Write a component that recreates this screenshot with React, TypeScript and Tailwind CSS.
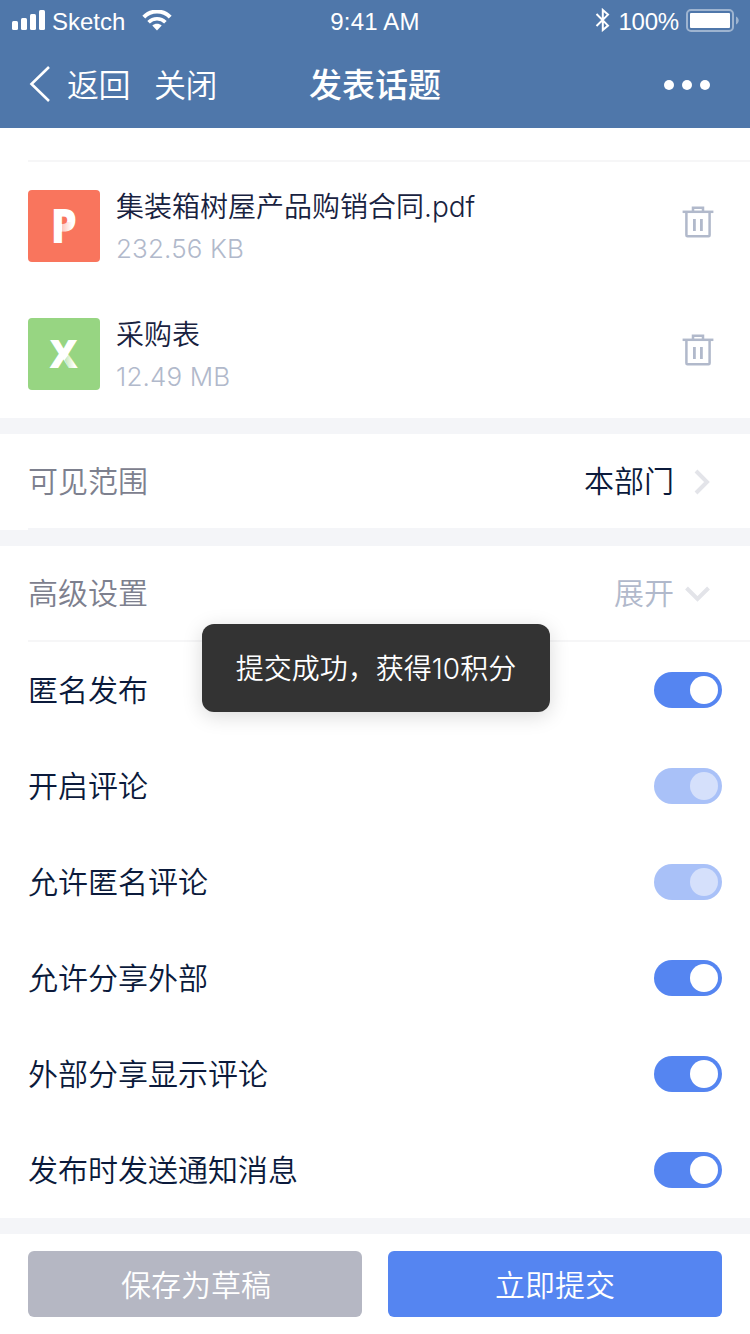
import React from 'react';

function StatusBar() {
  return (
    <div className="flex h-10 items-center font-['Liberation_Sans',sans-serif] text-[24px] leading-none">
      <div className="flex flex-1 items-center">
        <svg className="ml-3" width="33" height="20" viewBox="0 0 33 20" fill="#fff">
          <rect x="0" y="11" width="6" height="9" rx="1.5" />
          <rect x="9" y="8" width="6" height="12" rx="1.5" />
          <rect x="18" y="4" width="6" height="16" rx="1.5" />
          <rect x="27" y="0" width="6" height="20" rx="1.5" />
        </svg>
        <span className="ml-[7px] mt-[3px]">Sketch</span>
        <svg className="ml-[17px]" width="30" height="21" viewBox="0 0 30 21" fill="none" stroke="#fff">
          <path d="M1.8 7.2C9 -.4 21 -.4 28.2 7.2" strokeWidth="4" />
          <path d="M6.6 12.2C11.2 7.6 18.8 7.6 23.4 12.2" strokeWidth="3.6" />
          <path d="M15 20.4L10.3 15.6C13 13.2 17 13.2 19.7 15.6Z" fill="#fff" stroke="none" />
        </svg>
      </div>
      <span className="mt-[3px] tracking-[0.2px]">9:41 AM</span>
      <div className="flex flex-1 items-center justify-end">
        <svg className="mr-2" width="15" height="24" viewBox="0 0 15 24" fill="none" stroke="#fff" strokeWidth="2">
          <path d="M1.5 6L13 17.6L7.8 22V2L13 6.6L1.5 18" />
        </svg>
        <span className="mt-[3px] tracking-[-0.2px]">100%</span>
        <svg className="ml-[7px] mr-[11px]" width="53" height="23" viewBox="0 0 53 23">
          <rect x="1" y="1" width="46" height="21" rx="4" fill="none" stroke="#fff" strokeOpacity=".45" strokeWidth="2" />
          <rect x="4" y="4" width="40" height="15" rx="1" fill="#fff" />
          <path d="M50 7.5C53.6 9 53.6 14 50 15.5Z" fill="#fff" fillOpacity=".45" />
        </svg>
      </div>
    </div>
  );
}

function NavBar() {
  return (
    <div className="flex h-22 items-center">
      <div className="flex flex-1 items-center">
        <svg className="ml-[29px]" width="22" height="38" viewBox="0 0 22 38" fill="none" stroke="#fff" strokeWidth="2.6">
          <path d="M20 2L2.5 19L20 36" />
        </svg>
        <span className="-mt-[3px] ml-4 text-[32px] font-[350] leading-none tracking-[-0.5px]">返回</span>
        <span className="-mt-[3px] ml-6 text-[32px] font-[350] leading-none tracking-[-0.5px]">关闭</span>
      </div>
      <h1 className="-mt-[2px] text-[33px] font-medium leading-none">发表话题</h1>
      <div className="flex flex-1 justify-end">
        <div className="mr-10 mt-0.5 flex gap-2">
          <i className="size-2.5 rounded-full bg-white" />
          <i className="size-2.5 rounded-full bg-white" />
          <i className="size-2.5 rounded-full bg-white" />
        </div>
      </div>
    </div>
  );
}

function TrashIcon() {
  return (
    <svg className="-mt-2" width="32" height="32" viewBox="0 0 32 32" fill="none" stroke="#b1b9cb" strokeWidth="2.5">
      <path d="M.6 5.8H31.4" />
      <path d="M11 5V1.7H21V5" />
      <path d="M4.4 6V29.2Q4.4 30.2 5.4 30.2H26.6Q27.6 30.2 27.6 29.2V6" />
      <path d="M12.4 13V25M19.4 13V25" strokeWidth="2.8" />
    </svg>
  );
}

function PdfBadge() {
  return (
    <div className="relative flex size-18 items-center justify-center rounded bg-[#f9755d] font-['Open_Sans',sans-serif] text-[47px] font-extrabold leading-none text-white">
      <span className="-mt-[1px] scale-x-[0.88]">P</span>
      <svg className="absolute left-[34px] top-[32px]" width="10" height="10" viewBox="0 0 10 10">
        <defs>
          <linearGradient id="pdf-fold" x1="0" y1="0" x2="1" y2="0">
            <stop offset="0" stopColor="#f9755d" stopOpacity=".4" />
            <stop offset="1" stopColor="#f9755d" stopOpacity="0" />
          </linearGradient>
        </defs>
        <rect width="10" height="10" fill="url(#pdf-fold)" />
      </svg>
    </div>
  );
}

function SheetBadge() {
  return (
    <div className="relative flex size-18 items-center justify-center rounded bg-[#97d582] font-['Open_Sans',sans-serif] text-[38px] font-extrabold leading-none text-white">
      <span className="-mt-[2px] scale-x-[1.03]">X</span>
      <svg className="absolute left-[36px] top-[36px]" width="13" height="15" viewBox="0 0 13 15">
        <defs>
          <linearGradient id="sheet-fold" x1="0" y1="0" x2="1" y2="0">
            <stop offset="0.1" stopColor="#97d582" stopOpacity=".5" />
            <stop offset="0.8" stopColor="#97d582" stopOpacity="0" />
          </linearGradient>
        </defs>
        <path d="M5 0L13 14.5H5L.5 6Z" fill="url(#sheet-fold)" />
      </svg>
    </div>
  );
}

function FileRow({ badge, name, size }: { badge: React.ReactNode; name: string; size: string }) {
  return (
    <div className="flex h-32 items-center pl-7 pr-9">
      {badge}
      <div className="ml-4 mt-1 flex flex-1 flex-col">
        <span className="h-[42px] font-['Inter','Noto_Sans_CJK_SC',sans-serif] text-[28px] font-[350] leading-[42px] text-[#182240]">{name}</span>
        <span className="h-[42px] font-['Inter',sans-serif] text-[26px] font-light leading-[42px] tracking-[0.15px] text-[#b1b9cb]">{size}</span>
      </div>
      <TrashIcon />
    </div>
  );
}

function Band() {
  return <div className="h-4 bg-[#f4f5f8]" />;
}

function SwitchRow({ label, disabled = false }: { label: string; disabled?: boolean }) {
  return (
    <div className="flex h-24 items-center justify-between px-7">
      <span className="-mt-[5px] text-[30px] font-[350] leading-none text-[#0b1a3b]">{label}</span>
      <button
        role="switch"
        aria-checked="true"
        disabled={disabled}
        className={`flex h-9 w-17 items-center justify-end rounded-full pr-1 ${disabled ? 'bg-[#a9c1f8]' : 'bg-[#5585f1]'}`}
      >
        <i className={`size-7 rounded-full ${disabled ? 'bg-[#d5e0fb]' : 'bg-white'}`} />
      </button>
    </div>
  );
}

const switches = [
  { label: '匿名发布' },
  { label: '开启评论', disabled: true },
  { label: '允许匿名评论', disabled: true },
  { label: '允许分享外部' },
  { label: '外部分享显示评论' },
  { label: '发布时发送通知消息' },
];

export default function App() {
  return (
    <div className="relative flex h-[1334px] w-[750px] flex-col overflow-hidden bg-white font-['Noto_Sans_CJK_SC',sans-serif]">
      <header className="h-32 bg-[#4f77aa] text-white">
        <StatusBar />
        <NavBar />
      </header>

      <div className="ml-7 mt-8 h-0.5 bg-[#f6f6f7]" />
      <FileRow badge={<PdfBadge />} name="集装箱树屋产品购销合同.pdf" size="232.56 KB" />
      <FileRow badge={<SheetBadge />} name="采购表" size="12.49 MB" />
      <Band />

      <div className="flex h-[94px] items-center pl-7 pr-10 text-[30px] font-[350] leading-none">
        <span className="-mt-[4px] flex-1 text-[#7d808e]">可见范围</span>
        <span className="-mt-[4px] text-[#0b1a3b]">本部门</span>
        <svg className="ml-5 mt-0.5" width="16" height="26" viewBox="0 0 16 26" fill="none" stroke="#e3e4e9" strokeWidth="4">
          <path d="M2 2L13 13L2 24" />
        </svg>
      </div>
      <div className="ml-7 h-0.5 bg-[#f4f5f8]" />
      <Band />

      <div className="flex h-[94px] items-center pl-7 pr-10 text-[30px] font-[350] leading-none">
        <span className="-mt-[4px] flex-1 text-[#7d808e]">高级设置</span>
        <span className="-mt-[4px] text-[#b1b9cb]">展开</span>
        <svg className="ml-[11px] mt-0.5" width="25" height="16" viewBox="0 0 25 16" fill="none" stroke="#e3e4e9" strokeWidth="4">
          <path d="M1.5 2L12.5 13L23.5 2" />
        </svg>
      </div>
      <div className="ml-7 h-0.5 bg-[#f6f6f7]" />

      {switches.map((item) => (
        <SwitchRow key={item.label} label={item.label} disabled={item.disabled} />
      ))}
      <Band />

      <div className="flex gap-[26px] px-7 pt-[17px] text-[30px] font-[350] leading-none text-white">
        <button className="h-[66px] w-[334px] rounded-md bg-[#b5b7c3] pb-0.5 pl-0.5">保存为草稿</button>
        <button className="h-[66px] w-[334px] rounded-md bg-[#5585f1] pb-0.5">立即提交</button>
      </div>

      <div className="absolute left-[202px] top-[624px] flex h-22 w-[348px] items-center justify-center rounded-xl bg-[#333333] pt-0.5 font-['Inter','Noto_Sans_CJK_SC',sans-serif] text-[28px] font-[350] leading-none text-white shadow-[0_4px_20px_rgba(0,0,0,0.15)]">
        提交成功，获得10积分
      </div>
    </div>
  );
}
